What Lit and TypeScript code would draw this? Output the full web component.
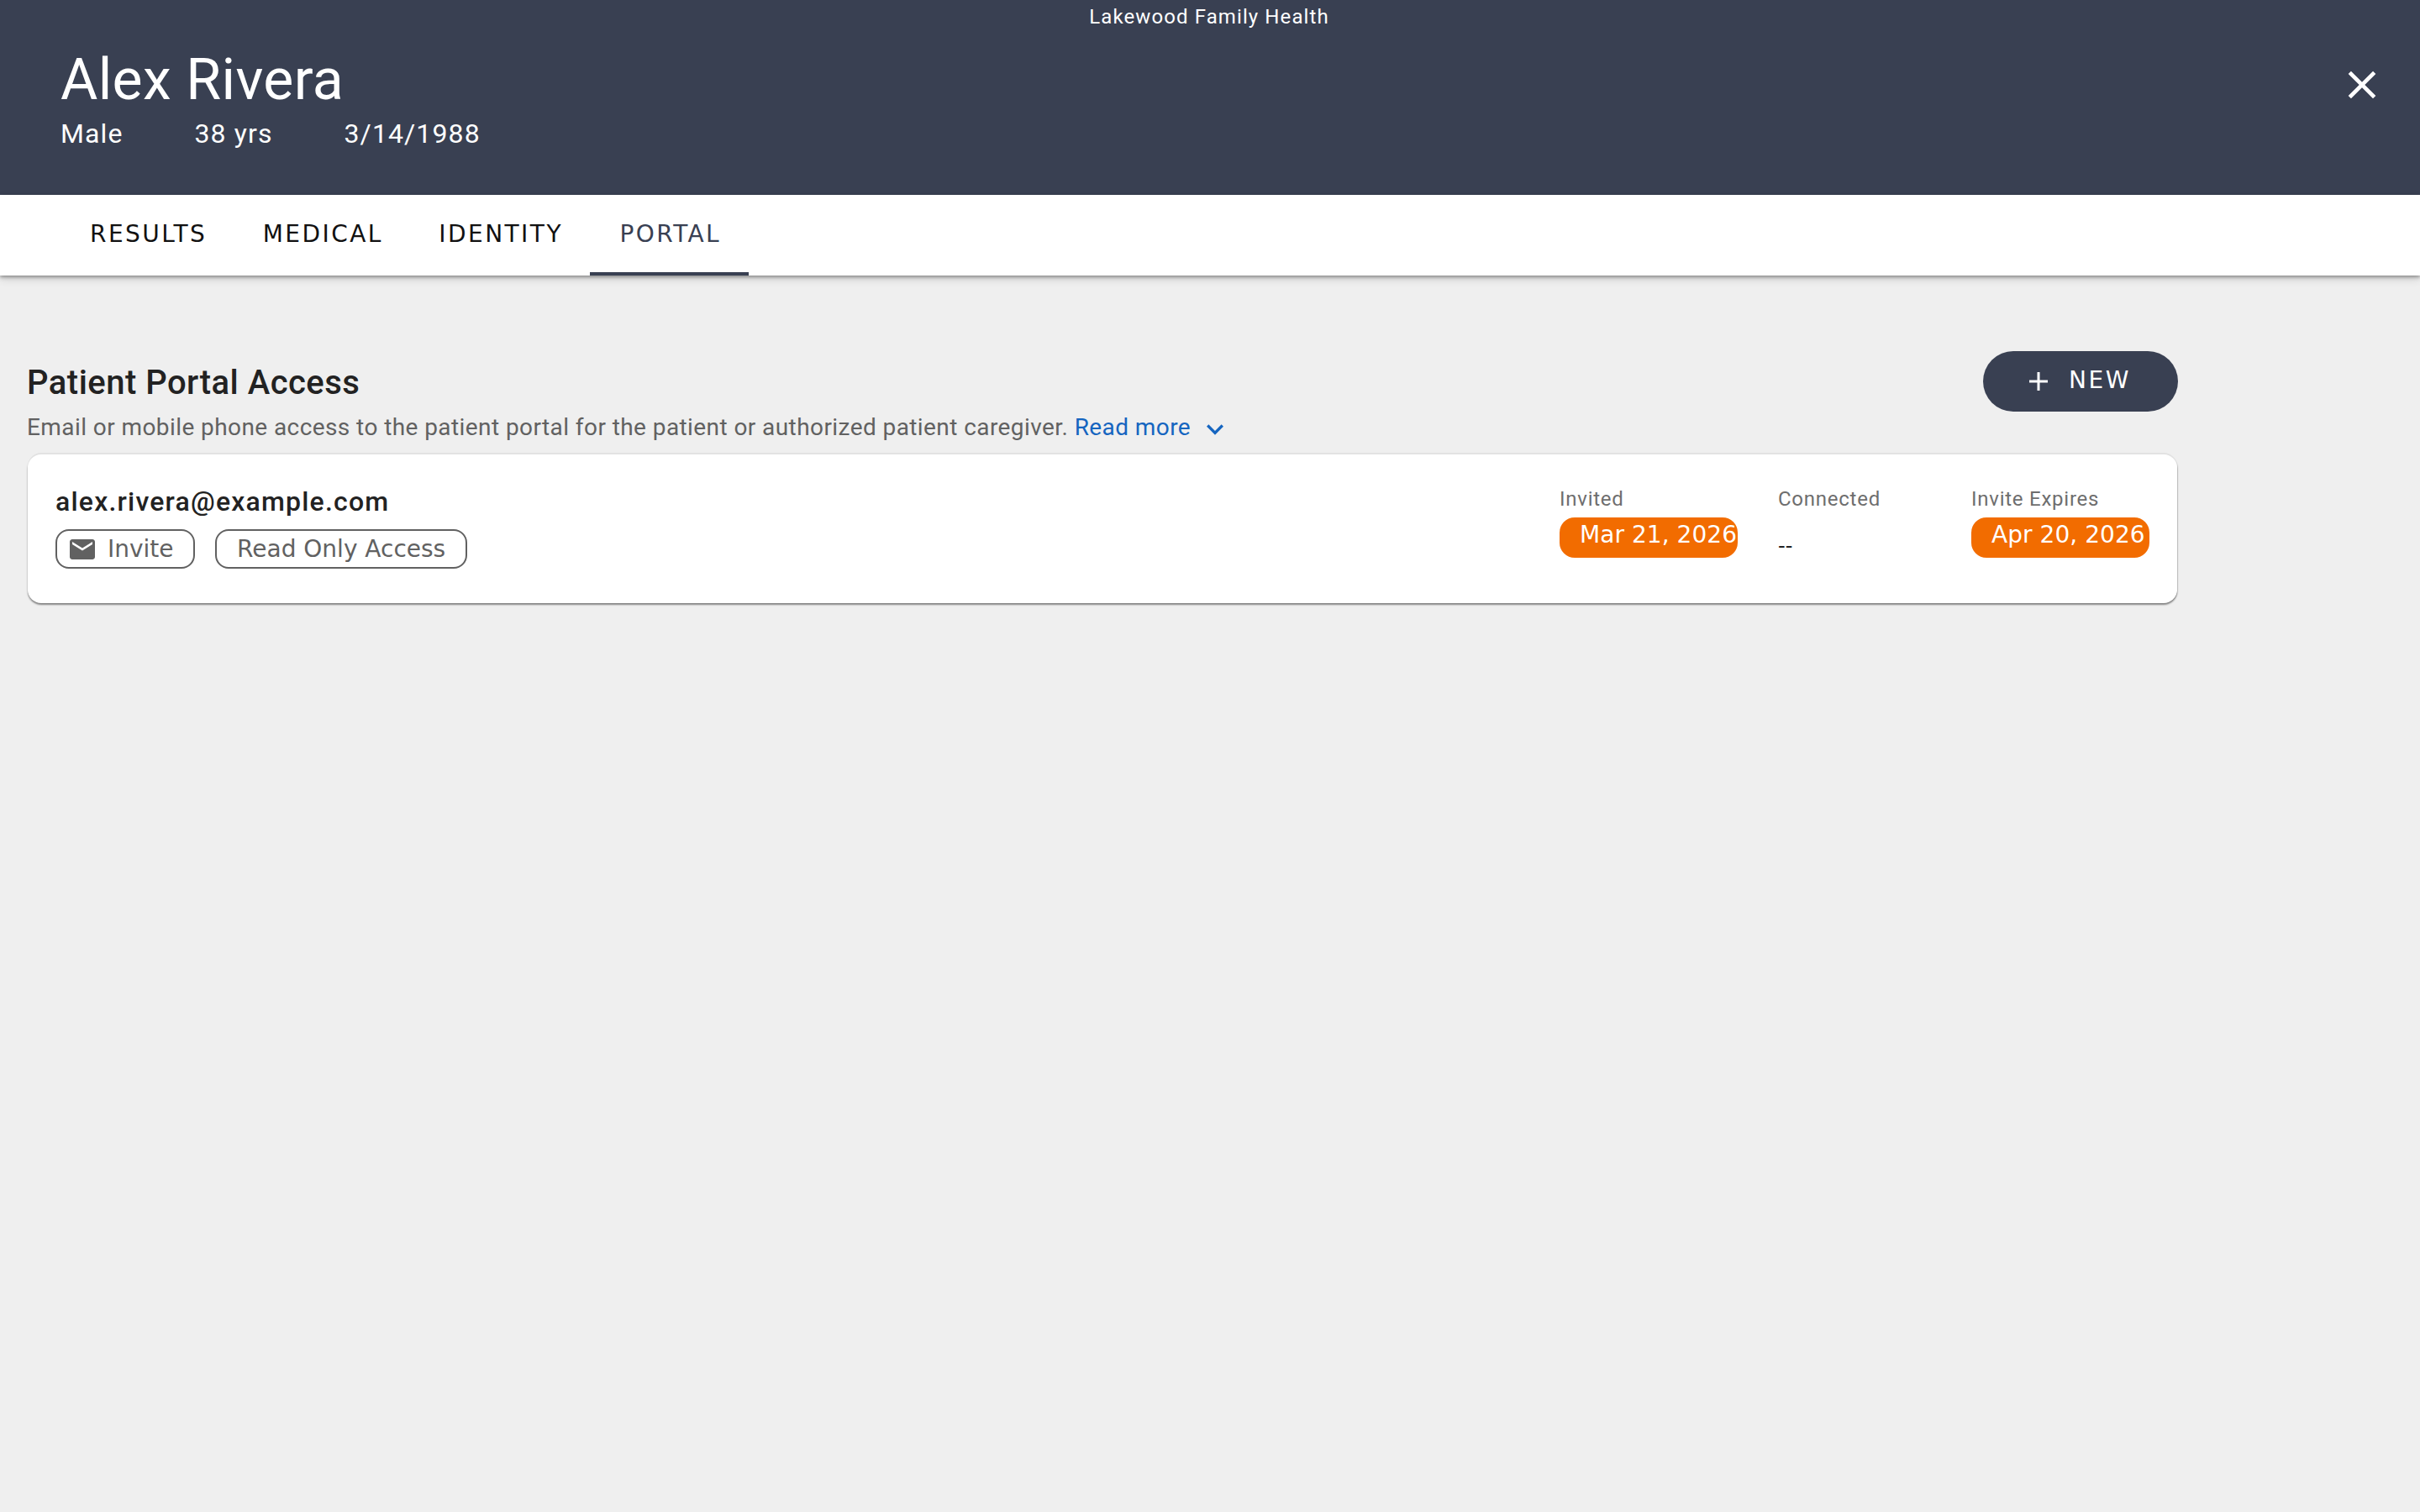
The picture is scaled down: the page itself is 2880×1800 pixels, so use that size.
import { LitElement, html, css, svg } from "lit";
import { customElement } from "lit/decorators.js";

const icon = (d: unknown, cls: string) =>
  html`<svg class=${cls} viewBox="0 0 24 24" aria-hidden="true">${d}</svg>`;

@customElement("app-root")
export class AppRoot extends LitElement {
  static styles = css`
    :host {
      display: block;
      width: 2880px;
      height: 1800px;
      background: #efefef;
      font-family: Roboto, "Liberation Sans", sans-serif;
      overflow: hidden;
    }
    .header {
      height: 232px;
      background: #394052;
      color: #fff;
      position: relative;
      box-sizing: border-box;
      padding: 55px 72px 0;
    }
    .org {
      position: absolute;
      top: 6px;
      left: 0;
      right: 2px;
      text-align: center;
      font-size: 24px;
      line-height: 28px;
      letter-spacing: 1.1px;
    }
    .name {
      font-size: 68px;
      line-height: 80px;
      font-weight: 400;
      letter-spacing: 0.35px;
      margin: 0;
    }
    .demo {
      display: flex;
      gap: 85px;
      font-size: 32px;
      line-height: 40px;
      letter-spacing: 1.1px;
      margin-top: 4px;
    }
    .close {
      position: absolute;
      left: 2783px;
      top: 73px;
      width: 56px;
      height: 56px;
      fill: #fff;
    }
    .tabs {
      height: 96px;
      background: #fff;
      display: flex;
      padding-left: 71px;
      box-shadow: 0 2px 4px rgba(0, 0, 0, 0.35), 0 4px 10px rgba(0, 0, 0, 0.14);
      position: relative;
      font-family: "DejaVu Sans", sans-serif;
    }
    .tab {
      box-sizing: border-box;
      height: 96px;
      padding: 0 30.5px 0 36px;
      line-height: 94px;
      font-size: 28px;
      letter-spacing: 2.45px;
      color: #111;
    }
    .tab.active {
      color: #394052;
      margin-left: 2px;
      padding: 0 32.5px 0 35px;
      border-bottom: 4px solid #394052;
    }
    .main {
      padding: 90px 0 0 33px;
      width: 2558px;
    }
    .head {
      display: flex;
      justify-content: space-between;
      align-items: flex-start;
    }
    .h2 {
      margin: 14px 0 0 -1px;
      font-size: 40px;
      line-height: 48px;
      font-weight: 500;
      color: #222;
      letter-spacing: 0.48px;
    }
    .new {
      width: 232px;
      height: 72px;
      margin-right: -1px;
      border-radius: 36px;
      background: #394052;
      color: #fff;
      display: flex;
      align-items: center;
      box-sizing: border-box;
      padding-left: 55px;
      font-family: "DejaVu Sans", sans-serif;
      font-size: 28px;
      letter-spacing: 2.6px;
    }
    .new span { margin-top: -3px; }
    .plus {
      width: 22px;
      height: 22px;
      margin-right: 25px;
      stroke: #fff;
      stroke-width: 3px;
      fill: none;
    }
    .desc {
      margin: -3px 0 0 -1px;
      font-size: 28px;
      line-height: 40px;
      color: #616161;
      letter-spacing: 0.42px;
      display: flex;
      align-items: center;
      white-space: pre;
    }
    .more { color: #1565c0; }
    .chev {
      width: 40px;
      height: 40px;
      fill: #1565c0;
      margin-left: 9px;
      margin-top: 4px;
    }
    .card {
      margin-top: 10px;
      box-sizing: border-box;
      height: 177px;
      background: #fff;
      border-radius: 16px;
      box-shadow: 0 -2px 0 #e2e2e2, 0 2px 2px rgba(0, 0, 0, 0.45), 1px 0 1px rgba(0, 0, 0, 0.1);
      display: flex;
      justify-content: space-between;
      padding: 36px 33px 0 33px;
    }
    .email {
      font-size: 32px;
      line-height: 40px;
      font-weight: 500;
      color: #222;
      letter-spacing: 1.2px;
    }
    .chips {
      display: flex;
      gap: 24px;
      margin-top: 13px;
    }
    .chip {
      box-sizing: border-box;
      height: 47px;
      border: 2px solid #616161;
      border-radius: 16px;
      display: flex;
      align-items: center;
      padding: 0 24px;
      font-family: "DejaVu Sans", sans-serif;
      font-size: 28px;
      letter-spacing: 0;
      color: #616161;
      white-space: nowrap;
    }
    .chip.invite { padding: 0 23.5px 0 12px; }
    .mail {
      width: 36px;
      height: 36px;
      fill: #616161;
      margin-right: 12px;
    }
    .cols { display: flex; padding-top: 2px; }
    .col { display: flex; flex-direction: column; align-items: flex-start; }
    .col.a { width: 260px; }
    .col.b { width: 230px; }
    .col.c { width: 212px; }
    .label {
      font-size: 24px;
      line-height: 30px;
      color: #6e6e6e;
      letter-spacing: 0.75px;
      white-space: nowrap;
    }
    .pill {
      margin-top: 7px;
      box-sizing: border-box;
      width: 212px;
      height: 48px;
      border-radius: 18px;
      background: #f26c00;
      color: #fff;
      font-family: "DejaVu Sans", sans-serif;
      font-size: 28px;
      line-height: 42px;
      padding-left: 24px;
      letter-spacing: 0.05px;
      white-space: nowrap;
    }
    .none {
      font-family: "DejaVu Sans", sans-serif;
      font-size: 24px;
      line-height: 30px;
      margin-top: 26px;
      color: #222;
    }
  `;

  render() {
    const tabs = ["RESULTS", "MEDICAL", "IDENTITY", "PORTAL"];
    return html`
      <header class="header">
        <div class="org">Lakewood Family Health</div>
        <h1 class="name">Alex Rivera</h1>
        <div class="demo"><span>Male</span><span>38 yrs</span><span>3/14/1988</span></div>
        ${icon(
          svg`<path d="M19 6.41 17.59 5 12 10.59 6.41 5 5 6.41 10.59 12 5 17.59 6.41 19 12 13.41 17.59 19 19 17.59 13.41 12z"/>`,
          "close"
        )}
      </header>
      <nav class="tabs">
        ${tabs.map(
          (t) => html`<div class="tab ${t === "PORTAL" ? "active" : ""}">${t}</div>`
        )}
      </nav>
      <main class="main">
        <div class="head">
          <h2 class="h2">Patient Portal Access</h2>
          <div class="new">
            <svg class="plus" viewBox="0 0 22 22" aria-hidden="true"><path d="M11 0v22M0 11h22"/></svg><span>NEW</span>
          </div>
        </div>
        <div class="desc">Email or mobile phone access to the patient portal for the patient or authorized patient caregiver. <span class="more">Read more</span>${icon(
          svg`<path d="M16.59 8.59 12 13.17 7.41 8.59 6 10l6 6 6-6z"/>`,
          "chev"
        )}</div>
        <section class="card">
          <div>
            <div class="email">alex.rivera@example.com</div>
            <div class="chips">
              <div class="chip invite">
                ${icon(
                  svg`<path d="M20 4H4c-1.1 0-1.99.9-1.99 2L2 18c0 1.1.9 2 2 2h16c1.1 0 2-.9 2-2V6c0-1.1-.9-2-2-2zm0 4-8 5-8-5V6l8 5 8-5v2z"/>`,
                  "mail"
                )}Invite
              </div>
              <div class="chip">Read Only Access</div>
            </div>
          </div>
          <div class="cols">
            <div class="col a"><div class="label">Invited</div><div class="pill">Mar 21, 2026</div></div>
            <div class="col b"><div class="label">Connected</div><div class="none">--</div></div>
            <div class="col c"><div class="label">Invite Expires</div><div class="pill">Apr 20, 2026</div></div>
          </div>
        </section>
      </main>
    `;
  }
}
